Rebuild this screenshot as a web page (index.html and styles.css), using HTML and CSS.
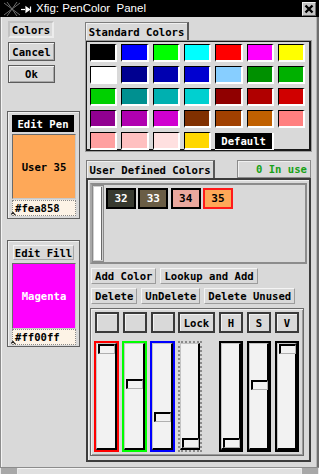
FILE: index.html
```html
<!DOCTYPE html>
<html>
<head>
<meta charset="utf-8">
<title>Xfig: PenColor Panel</title>
<link rel="stylesheet" href="styles.css">
</head>
<body>
<div class="app">
  <div class="titlebar">
    <svg class="wm-icon" width="32" height="17" viewBox="0 0 32 17">
      <g stroke="#6e6e6e" stroke-width="1" fill="none">
        <line x1="3" y1="3" x2="19" y2="15"/>
        <line x1="19" y1="3" x2="3" y2="15"/>
        <line x1="6" y1="2" x2="16" y2="16"/>
        <line x1="16" y1="2" x2="6" y2="16"/>
      </g>
      <g stroke="#ffffff" stroke-width="1.2" fill="#ffffff">
        <line x1="20" y1="9.5" x2="24" y2="9.5"/>
        <path d="M25 7 L28.5 9.5 L25 12 Z"/>
        <line x1="29.5" y1="6.5" x2="29.5" y2="12.5"/>
      </g>
    </svg>
    <div class="title">Xfig: PenColor  Panel</div>
    <div class="close">
      <svg width="10" height="10" viewBox="0 0 10 10"><path d="M1.5 1.5 L8.5 8.5 M8.5 1.5 L1.5 8.5" stroke="#000" stroke-width="2.4"/></svg>
    </div>
  </div>

  <div class="win">
    <div class="left">
      <div class="lbl colors-lbl">Colors</div>
      <div class="cmd cancel">Cancel</div>
      <div class="cmd ok">Ok</div>

      <div class="edit edit-pen">
        <div class="edit-title dark">Edit Pen</div>
        <div class="edit-swatch pen-swatch">User 35</div>
        <div class="hex">#fea858<span class="caret"></span></div>
      </div>

      <div class="edit edit-fill">
        <div class="edit-title raised">Edit Fill</div>
        <div class="edit-swatch fill-swatch">Magenta</div>
        <div class="hex">#ff00ff<span class="caret"></span></div>
      </div>
    </div>

    <div class="right">
      <div class="tab std-tab">Standard Colors</div>
      <div class="std">
        <div class="std-grid">
          <div class="sw" style="background:#000000"></div>
          <div class="sw" style="background:#0000ff"></div>
          <div class="sw" style="background:#00ff00"></div>
          <div class="sw" style="background:#00ffff"></div>
          <div class="sw" style="background:#ff0000"></div>
          <div class="sw" style="background:#ff00ff"></div>
          <div class="sw" style="background:#ffff00"></div>

          <div class="sw" style="background:#ffffff"></div>
          <div class="sw" style="background:#000090"></div>
          <div class="sw" style="background:#0000b0"></div>
          <div class="sw" style="background:#0000d0"></div>
          <div class="sw" style="background:#87ceff"></div>
          <div class="sw" style="background:#009000"></div>
          <div class="sw" style="background:#00b000"></div>

          <div class="sw" style="background:#00d000"></div>
          <div class="sw" style="background:#009090"></div>
          <div class="sw" style="background:#00b0b0"></div>
          <div class="sw" style="background:#00d0d0"></div>
          <div class="sw" style="background:#900000"></div>
          <div class="sw" style="background:#b00000"></div>
          <div class="sw" style="background:#d00000"></div>

          <div class="sw" style="background:#900090"></div>
          <div class="sw" style="background:#b000b0"></div>
          <div class="sw" style="background:#d000d0"></div>
          <div class="sw" style="background:#803000"></div>
          <div class="sw" style="background:#a04000"></div>
          <div class="sw" style="background:#c06000"></div>
          <div class="sw" style="background:#ff8080"></div>

          <div class="sw" style="background:#ffa0a0"></div>
          <div class="sw" style="background:#ffc0c0"></div>
          <div class="sw" style="background:#ffe0e0"></div>
          <div class="sw" style="background:#ffd700"></div>
          <div class="default-btn">Default</div>
        </div>
      </div>

      <div class="udrow">
        <div class="tab ud-tab">User Defined Colors</div>
        <div class="inuse">0 In use</div>
      </div>

      <div class="ubox">
        <div class="scroll">
          <div class="vbar"><div class="vthumb"></div></div>
          <div class="uswatches">
            <div class="usw" style="background:#383a30;color:#fff">32</div>
            <div class="usw" style="background:#6a5d45;color:#fff">33</div>
            <div class="usw" style="background:#eaa89e;color:#000">34</div>
            <div class="usw current" style="background:#fea858;color:#000">35</div>
          </div>
        </div>

        <div class="brow">
          <div class="btn">Add Color</div>
          <div class="btn">Lookup and Add</div>
        </div>
        <div class="brow">
          <div class="btn">Delete</div>
          <div class="btn">UnDelete</div>
          <div class="btn">Delete Unused</div>
        </div>

        <div class="sliders">
          <div class="srow tops">
            <div class="box"></div>
            <div class="box"></div>
            <div class="box"></div>
            <div class="box lock">Lock</div>
            <div class="box">H</div>
            <div class="box">S</div>
            <div class="box">V</div>
          </div>
          <div class="srow bars">
            <div class="sl red"><div class="track"><div class="thumb" style="top:0px"></div></div></div>
            <div class="sl green"><div class="track"><div class="thumb" style="top:35px"></div></div></div>
            <div class="sl blue"><div class="track"><div class="thumb" style="top:68px"></div></div></div>
            <div class="sl lock-sl"><div class="track"><div class="thumb" style="top:94px"></div></div></div>
            <div class="sl"><div class="track"><div class="thumb" style="top:94px"></div></div></div>
            <div class="sl"><div class="track"><div class="thumb" style="top:36px"></div></div></div>
            <div class="sl"><div class="track"><div class="thumb" style="top:0px"></div></div></div>
          </div>
        </div>
      </div>
    </div>
  </div>

  <div class="frame-bottom">
    <div class="corner"></div>
    <div class="mid"></div>
    <div class="corner"></div>
  </div>
</div>
</body>
</html>
```

FILE: styles.css
```css
* { box-sizing: border-box; }
html, body { margin: 0; padding: 0; }
body {
  width: 319px;
  height: 474px;
  overflow: hidden;
  background: #000;
  font-family: "DejaVu Sans Mono", monospace;
  font-weight: bold;
  font-size: 10.6px;
  color: #000;
}
.app {
  width: 319px;
  height: 474px;
  display: flex;
  flex-direction: column;
}

/* title bar */
.titlebar {
  height: 17px;
  flex: none;
  background: #000;
  display: flex;
  align-items: center;
}
.wm-icon { flex: none; margin-left: 1px; }
.title {
  flex: 1;
  margin-left: 3px;
  color: #fff;
  font-family: "Liberation Sans", sans-serif;
  font-weight: normal;
  font-size: 11.5px;
  white-space: pre;
  line-height: 17px;
}
.close {
  width: 14px;
  height: 14px;
  margin-right: 3px;
  background: #c4c4c4;
  border: 1px solid;
  border-color: #f0f0f0 #6a6a6a #6a6a6a #f0f0f0;
  display: flex;
  align-items: center;
  justify-content: center;
}

/* window body */
.win {
  height: 450px;
  flex: none;
  display: flex;
  background: #d9d9d9;
  border-left: 1px solid #8c8c8c;
  border-right: 2px solid #6e6e6e;
  box-shadow: inset 1px 0 0 #f4f4f4, inset -1px 0 0 #b4b4b4;
}
.left {
  width: 82px;
  flex: none;
  display: flex;
  flex-direction: column;
  align-items: flex-start;
}
.right {
  flex: 1;
  display: flex;
  flex-direction: column;
  align-items: flex-start;
}

/* left column */
.lbl {
  display: flex;
  align-items: center;
  justify-content: center;
}
.colors-lbl {
  margin: 4px 0 0 7px;
  width: 46px;
  height: 17px;
  border: 2px solid;
  border-color: #c2c2c2 #ececec #ececec #c2c2c2;
}
.cmd {
  margin: 4px 0 0 7px;
  width: 47px;
  display: flex;
  align-items: center;
  justify-content: center;
  border: 1px solid #5c5c5c;
  box-shadow: inset 1px 1px 0 #f2f2f2, inset -1px -1px 0 #a8a8a8;
}
.cancel { height: 19px; }
.ok { height: 18px; }

.edit {
  margin-left: 6px;
  width: 73px;
  border: 1px solid #606060;
  box-shadow: inset 1px 1px 0 #f0f0f0;
  padding: 3px 3px 0 4px;
  display: flex;
  flex-direction: column;
  align-items: flex-start;
}
.edit-pen { margin-top: 28px; height: 108px; }
.edit-fill { margin-top: 21px; height: 107px; }

.edit-title {
  display: flex;
  align-items: center;
  justify-content: center;
}
.edit-title.dark {
  width: 62px;
  height: 17px;
  background: #000;
  color: #fff;
  margin-bottom: 2px;
}
.edit-title.raised {
  width: 61px;
  height: 15px;
  margin: 1px 0 3px 1px;
  border: 1px solid;
  border-color: #f2f2f2 #a6a6a6 #a6a6a6 #f2f2f2;
}
.edit-swatch {
  width: 64px;
  display: flex;
  align-items: center;
  justify-content: center;
  border: 1px solid;
  border-color: #6a6a6a #c8c8c8 #c8c8c8 #6a6a6a;
}
.pen-swatch { height: 65px; background: #fea858; color: #000; margin-bottom: 1px; }
.fill-swatch { height: 66px; background: #ff00ff; color: #fff; }
.hex {
  position: relative;
  width: 64px;
  height: 16px;
  background: #fdf3e6;
  border: 1px dotted #8a8a8a;
  padding-left: 2px;
  line-height: 14px;
}
.caret {
  position: absolute;
  left: 0px;
  bottom: 0px;
  width: 4px;
  height: 3px;
  border-left: 1px solid #000;
  border-top: 1px solid #000;
  transform: rotate(45deg);
  transform-origin: left top;
}

/* tabs */
.tab {
  display: flex;
  align-items: center;
  justify-content: center;
  border: 1px solid #7c7c7c;
  box-shadow: inset 1px 1px 0 #f0f0f0;
}
.std-tab {
  margin: 5px 0 0 2px;
  width: 104px;
  height: 18px;
  border-bottom: none;
  border-right: 2px solid #5a5a5a;
}

/* standard colors */
.std {
  margin-left: 2px;
  width: 227px;
  height: 112px;
  border: 1px solid #9c9c9c;
  box-shadow: inset 1px 1px 0 #1a1a1a, inset -2px -2px 0 #1a1a1a;
  padding: 3px 0 0 4px;
}
.std-grid {
  display: grid;
  grid-template-columns: repeat(7, 27.33px);
  grid-template-rows: repeat(5, 18px);
  column-gap: 4px;
  row-gap: 4px;
}
.sw {
  border-top: 1px solid #000;
  border-left: 1px solid #000;
  border-right: 2px solid #ffffff;
  border-bottom: 2px solid #ffffff;
}
.default-btn {
  grid-column: span 2;
  background: #000;
  color: #fff;
  display: flex;
  align-items: center;
  justify-content: center;
  height: 17px;
  margin-top: 1px;
  border-right: 2px solid #ffffff;
  border-bottom: 1px solid #ffffff;
}

/* user defined */
.udrow {
  margin: 8px 0 0 3px;
  width: 225px;
  height: 18px;
  display: flex;
  justify-content: space-between;
}
.ud-tab {
  width: 129px;
  height: 18px;
  border-right: 2px solid #5a5a5a;
  border-bottom: none;
}
.inuse {
  width: 74px;
  height: 18px;
  display: flex;
  align-items: center;
  justify-content: flex-end;
  padding-right: 3px;
  color: #17a117;
  border: 1px solid #8a8a8a;
  box-shadow: inset 1px 1px 0 #f0f0f0;
}

.ubox {
  margin-left: 3px;
  width: 225px;
  height: 284px;
  border: 2px solid #3c3c3c;
  box-shadow: inset 1px 1px 0 #f0f0f0;
  padding: 3px 0 0 2px;
  display: flex;
  flex-direction: column;
  align-items: flex-start;
}
.scroll {
  width: 217px;
  height: 81px;
  border: 2px solid;
  border-color: #8c8c8c #8c8c8c #8c8c8c #a8a8a8;
  display: flex;
  align-items: flex-start;
}
.vbar {
  width: 12px;
  height: 100%;
  flex: none;
  border: 1px solid #8a8a8a;
  padding: 1px;
  background: #d0d0d0;
}
.vthumb {
  width: 100%;
  height: 100%;
  background: #fff;
  border-right: 1px solid #6a6a6a;
}
.uswatches {
  display: flex;
  gap: 2.33px;
  margin: 3px 0 0 2px;
}
.usw {
  width: 30px;
  height: 21px;
  border: 2px solid #000;
  display: flex;
  align-items: center;
  justify-content: center;
  font-size: 11px;
}
.usw.current { border-color: #ff1a1a; }

.brow {
  display: flex;
  gap: 4px;
  margin: 4px 0 0 1px;
  height: 16px;
}
.brow:first-of-type { margin-top: 5px; }
.btn {
  height: 16px;
  padding: 0 3px;
  display: flex;
  align-items: center;
  border: 1px solid;
  border-color: #f4f4f4 #9c9c9c #9c9c9c #f4f4f4;
  white-space: pre;
}

/* sliders */
.sliders {
  margin-top: 4px;
  width: 214px;
  height: 148px;
  border: 1px solid #6a6a6a;
  box-shadow: inset 1px 1px 0 #f0f0f0, inset -1px -1px 0 #9a9a9a;
  padding: 3px 0 0 3px;
}
.srow {
  display: grid;
  grid-template-columns: 25px 25px 25px 38px 25px 25px 24px;
  column-gap: 3px;
}
.tops { height: 21px; }
.box {
  width: 24px;
  height: 21px;
  justify-self: end;
  border: 2px solid #3a3a3a;
  box-shadow: inset 1px 1px 0 #f2f2f2;
  display: flex;
  align-items: center;
  justify-content: center;
}
.box.lock { width: 37px; justify-self: start; }
.tops .box:nth-child(n+5) { justify-self: start; }

.bars { margin-top: 8px; height: 111px; }
.sl {
  width: 25px;
  height: 111px;
  border: 2px solid #000;
}
.sl.red { border-color: #ff0000; }
.sl.green { border-color: #00ff00; }
.sl.blue { border-color: #0000ff; }
.sl.lock-sl { width: 24px; border: 2px dotted #8a8a8a; }
.bars .sl:nth-child(n+5) { width: 24px; }
.track {
  position: relative;
  width: 100%;
  height: 100%;
  background: #f2f2f2;
  border-top: 1px solid #c4c4c4;
  border-left: 1px solid #c4c4c4;
  border-right: 2px solid #000;
  border-bottom: 2px solid #000;
}
.thumb {
  position: absolute;
  left: 1px;
  width: 17px;
  height: 10px;
  background: #f2f2f2;
  border-top: 2px solid #000;
  border-left: 2px solid #000;
  border-right: 1px solid #b0b0b0;
  border-bottom: 1px solid #b0b0b0;
}

/* bottom frame */
.frame-bottom {
  flex: 1;
  display: flex;
  background: #d0d0d0;
  border-top: 1px solid #8c8c8c;
}
.corner {
  width: 18px;
  background: #a8a8a8;
  border-left: 1px solid #e8e8e8;
  border-right: 1px solid #e8e8e8;
}
.mid {
  flex: 1;
  background: #e0e0e0;
  border-top: 1px solid #f4f4f4;
}
```
